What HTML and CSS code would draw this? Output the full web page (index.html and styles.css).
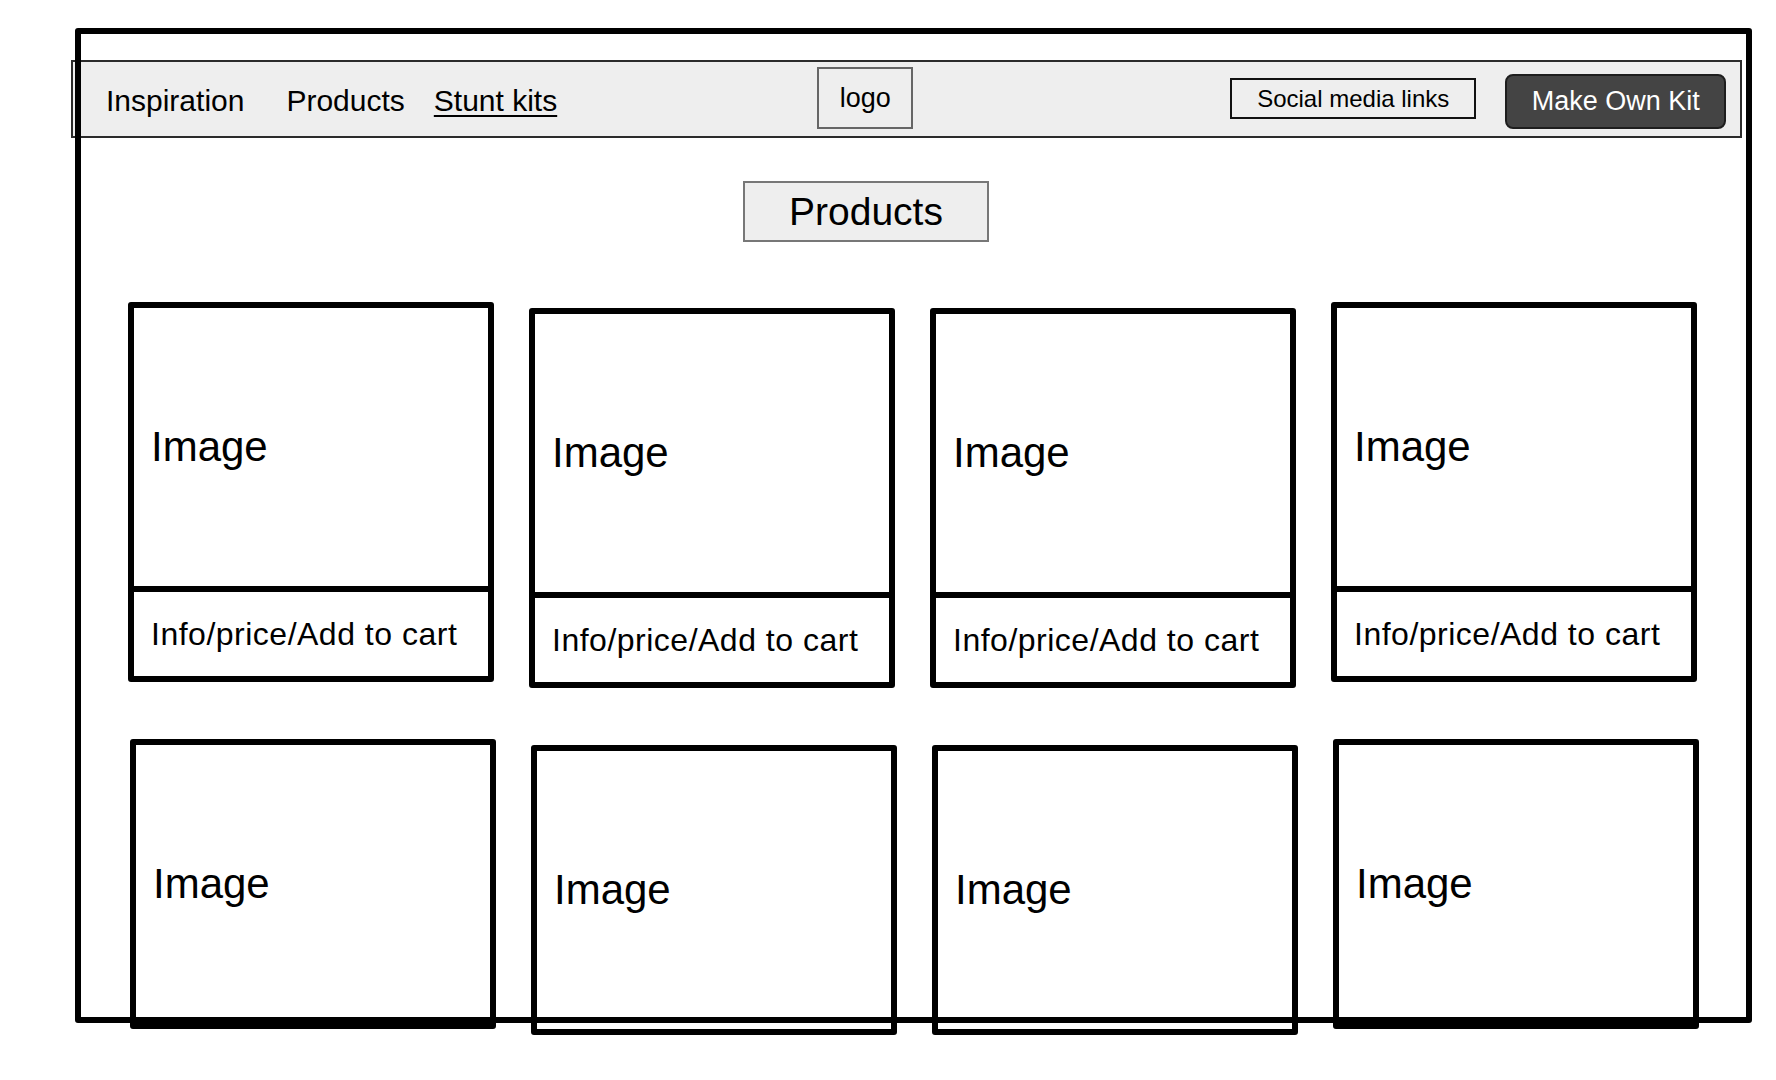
FILE: index.html
```html
<!DOCTYPE html>
<html lang="en">

<head>
    <meta charset="UTF-8">
    <meta name="viewport" content="width=device-width, initial-scale=1.0">
    <title>Stunt kits - Products</title>
    <link rel="stylesheet" href="styles.css">
</head>

<body>
    <div class="page">
        <header class="nav">
            <a class="nav-link" href="#">Inspiration</a>
            <a class="nav-link nav-products" href="#">Products</a>
            <a class="nav-link nav-stunt" href="#">Stunt kits</a>
            <div class="logo">logo</div>
            <div class="social">Social media links</div>
            <button class="make-kit">Make Own Kit</button>
        </header>

        <h1 class="page-title">Products</h1>

        <div class="products">
            <div class="card">
                <div class="card-image">Image</div>
                <div class="card-info">Info/price/Add to cart</div>
            </div>
            <div class="card low">
                <div class="card-image">Image</div>
                <div class="card-info">Info/price/Add to cart</div>
            </div>
            <div class="card low">
                <div class="card-image">Image</div>
                <div class="card-info">Info/price/Add to cart</div>
            </div>
            <div class="card">
                <div class="card-image">Image</div>
                <div class="card-info">Info/price/Add to cart</div>
            </div>

            <div class="card short">
                <div class="card-image">Image</div>
            </div>
            <div class="card short low">
                <div class="card-image">Image</div>
            </div>
            <div class="card short low">
                <div class="card-image">Image</div>
            </div>
            <div class="card short">
                <div class="card-image">Image</div>
            </div>
        </div>

        <!-- browser window outline drawn over the page -->
        <div class="frame"></div>
    </div>
</body>

</html>
```

FILE: styles.css
```css
* {
    box-sizing: border-box;
}

body {
    font-family: 'Liberation Sans', Arial, sans-serif;
    background-color: #ffffff;
    color: #000;
    margin: 0;
    padding: 0;
}

.page {
    position: relative;
    width: 1776px;
    height: 1080px;
    overflow: hidden;
}

.frame {
    position: absolute;
    left: 75px;
    top: 28px;
    width: 1677px;
    height: 995px;
    border: 6px solid #000;
    border-radius: 3px;
    pointer-events: none;
    z-index: 2;
}

.nav {
    display: flex;
    align-items: center;
    margin: 60px 0 0 71px;
    width: 1671px;
    height: 78px;
    padding: 4px 13px 0 33px;
    background-color: #eeeeee;
    border: 2px solid #2b2b2b;
}

.nav-link {
    font-size: 30px;
    color: #000;
    text-decoration: none;
}

.nav-products {
    margin-left: 42px;
}

.nav-stunt {
    margin-left: 29px;
    text-decoration: underline;
    text-underline-offset: 4px;
    text-decoration-thickness: 2px;
}

.logo {
    margin-left: 260px;
    margin-top: -6px;
    width: 96px;
    height: 62px;
    border: 2px solid #666;
    display: flex;
    align-items: center;
    justify-content: center;
    font-size: 27px;
}

.social {
    margin-left: 317px;
    margin-top: -5px;
    width: 246px;
    height: 41px;
    border: 2px solid #111;
    display: flex;
    align-items: center;
    justify-content: center;
    font-size: 24px;
}

.make-kit {
    margin-left: 29px;
    width: 221px;
    height: 55px;
    background-color: #444444;
    border: 2px solid #1e1e1e;
    border-radius: 8px;
    color: #fff;
    font-family: inherit;
    font-size: 27px;
    padding: 0;
    cursor: pointer;
}

.page-title {
    margin: 43px 0 0 743px;
    width: 246px;
    height: 61px;
    background-color: #eeeeee;
    border: 2px solid #777;
    display: flex;
    align-items: center;
    justify-content: center;
    font-size: 39px;
    font-weight: normal;
}

.products {
    display: grid;
    grid-template-columns: repeat(4, 366px);
    column-gap: 35px;
    row-gap: 51px;
    align-items: start;
    margin: 60px 0 0 128px;
}

.card {
    width: 366px;
    height: 380px;
    border: 6px solid #000;
    border-radius: 3px;
    display: flex;
    flex-direction: column;
}

.card.low {
    margin-top: 6px;
}

.card.short {
    height: 290px;
    margin-left: 2px;
}

.card-image {
    flex: 1;
    display: flex;
    align-items: center;
    padding: 0 17px;
    font-size: 42px;
}

.card-info {
    height: 90px;
    border-top: 6px solid #000;
    display: flex;
    align-items: center;
    padding: 0 17px;
    font-size: 32px;
    letter-spacing: 0.5px;
}
```
